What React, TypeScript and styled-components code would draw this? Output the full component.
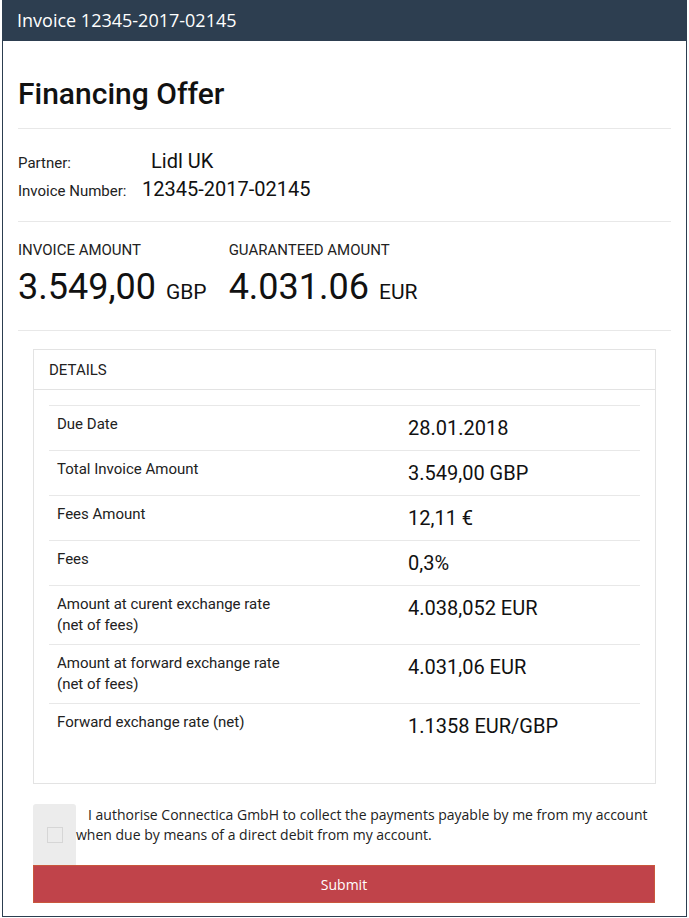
import React from 'react';
import styled, { createGlobalStyle } from 'styled-components';

const GlobalStyle = createGlobalStyle`
body {
    margin: 0;
    background: #fff;
    font-family: Roboto, "Liberation Sans", sans-serif;
}
`;

const Frame = styled.div`
box-sizing: border-box;
margin: 0 2px;
width: 685px;
height: 917px;
border: 1px solid #2c3e50;
border-top: none;
`;

const TopBar = styled.div`
box-sizing: border-box;
height: 41px;
background-color: #2d3e50;
color: #fff;
font-family: "Open Sans", sans-serif;
font-size: 18px;
padding: 8px 0 0 15px;
margin: 0 -1px;
`;

const Body = styled.div`
box-sizing: border-box;
padding: 0 15px 0 15px;
`;

const Title = styled.h1`
margin: 0;
padding: 35px 0 17px 0;
font-size: 30px;
font-weight: 500;
line-height: 35px;
color: #111;
border-bottom: 1px solid #e8e8e8;
`;

const InfoBlock = styled.div`
padding: 20px 0 16px 0;
border-bottom: 1px solid #e8e8e8;
`;

const InfoRow = styled.div`
display: flex;
align-items: baseline;
height: 28px;
`;

interface InfoLabelProps {
    readonly width: number;
}
const InfoLabel = styled.span<InfoLabelProps>`
width: ${props => props.width}px;
font-size: 15px;
color: #222;
`;

const InfoValue = styled.span`
font-size: 20px;
color: #111;
`;

const AmountBlock = styled.div`
display: flex;
gap: 22px;
padding: 19px 0 16px 0;
border-bottom: 1px solid #e8e8e8;
`;

const AmountCol = styled.div`
display: flex;
flex-direction: column;
`;

const AmountLabel = styled.div`
font-size: 15px;
color: #222;
line-height: 18px;
`;

const AmountValue = styled.div`
font-size: 36px;
color: #111;
line-height: 44px;
margin-top: 6px;
`;

const Currency = styled.span`
font-size: 21px;
margin-left: 10px;
`;

const Panel = styled.div`
box-sizing: border-box;
margin: 18px 30px 0 30px;
height: 435px;
border: 1px solid #e3e3e3;
`;

const PanelHeader = styled.div`
box-sizing: border-box;
height: 40px;
padding: 11px 15px 0 15px;
font-size: 15px;
color: #222;
border-bottom: 1px solid #e3e3e3;
`;

const Table = styled.div`
margin: 15px 15px 0 15px;
border-top: 1px solid #e8e8e8;
`;

interface RowProps {
    readonly last?: boolean;
    readonly height: number;
}
const Row = styled.div<RowProps>`
box-sizing: border-box;
display: grid;
grid-template-columns: 351px 1fr;
height: ${props => props.height}px;
padding: 8px 8px 0 8px;
border-bottom: ${props => props.last ? "none" : "1px solid #e8e8e8"};
`;

const RowLabel = styled.div`
font-size: 15px;
line-height: 21px;
color: #222;
`;

const RowValue = styled.div`
font-size: 20px;
line-height: 26px;
padding-top: 1px;
color: #111;
`;

const Consent = styled.label`
display: flex;
margin: 20px 30px 0 30px;
`;

const CheckArea = styled.div`
box-sizing: border-box;
flex: 0 0 43px;
height: 61px;
background-color: #ececec;
border-radius: 3px 3px 0 0;
display: flex;
align-items: center;
justify-content: center;
`;

const CheckBox = styled.span`
display: block;
width: 16px;
height: 16px;
border: 1px solid #d6d6d6;
box-sizing: border-box;
`;

const ConsentText = styled.div`
font-family: "Open Sans", sans-serif;
font-size: 14px;
line-height: 20px;
color: #222;
padding-top: 1px;
text-indent: 12px;
`;

const SubmitButton = styled.button`
box-sizing: border-box;
display: block;
margin: 0 30px 0 30px;
width: 622px;
height: 38px;
background-color: #c0434a;
border: 1px solid #c9573c;
color: #fff;
font-family: "Open Sans", sans-serif;
font-size: 14px;
cursor: pointer;
`;

type DetailRow = {
    label: string[];
    value: string;
    height: number;
};

const rows: DetailRow[] = [
    { label: ["Due Date"], value: "28.01.2018", height: 45 },
    { label: ["Total Invoice Amount"], value: "3.549,00 GBP", height: 45 },
    { label: ["Fees Amount"], value: "12,11 €", height: 45 },
    { label: ["Fees"], value: "0,3%", height: 45 },
    { label: ["Amount at curent exchange rate", "(net of fees)"], value: "4.038,052 EUR", height: 59 },
    { label: ["Amount at forward exchange rate", "(net of fees)"], value: "4.031,06 EUR", height: 59 },
    { label: ["Forward exchange rate (net)"], value: "1.1358 EUR/GBP", height: 45 },
];

const App: React.FC = () => {
    return (
        <>
            <GlobalStyle />
            <Frame>
                <TopBar>Invoice 12345-2017-02145</TopBar>
                <Body>
                    <Title>Financing Offer</Title>
                    <InfoBlock>
                        <InfoRow><InfoLabel width={133}>Partner:</InfoLabel><InfoValue>Lidl UK</InfoValue></InfoRow>
                        <InfoRow><InfoLabel width={124}>Invoice Number:</InfoLabel><InfoValue>12345-2017-02145</InfoValue></InfoRow>
                    </InfoBlock>
                    <AmountBlock>
                        <AmountCol>
                            <AmountLabel>INVOICE AMOUNT</AmountLabel>
                            <AmountValue>3.549,00<Currency>GBP</Currency></AmountValue>
                        </AmountCol>
                        <AmountCol>
                            <AmountLabel>GUARANTEED AMOUNT</AmountLabel>
                            <AmountValue>4.031.06<Currency>EUR</Currency></AmountValue>
                        </AmountCol>
                    </AmountBlock>
                </Body>
                <Panel>
                    <PanelHeader>DETAILS</PanelHeader>
                    <Table>
                        {rows.map((r, i) => (
                            <Row key={r.value} height={r.height} last={i === rows.length - 1}>
                                <RowLabel>{r.label.map(l => <div key={l}>{l}</div>)}</RowLabel>
                                <RowValue>{r.value}</RowValue>
                            </Row>
                        ))}
                    </Table>
                </Panel>
                <Consent>
                    <CheckArea><CheckBox /></CheckArea>
                    <ConsentText>I authorise Connectica GmbH to collect the payments payable by me from my account when due by means of a direct debit from my account.</ConsentText>
                </Consent>
                <SubmitButton>Submit</SubmitButton>
            </Frame>
        </>
    );
};

export default App;
